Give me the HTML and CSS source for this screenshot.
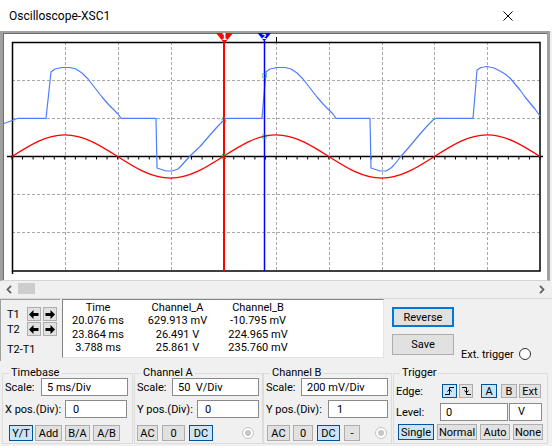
FILE: index.html
```html
<!DOCTYPE html>
<html lang="en">
<head>
<meta charset="utf-8">
<title>Oscilloscope-XSC1</title>
<link rel="stylesheet" href="styles.css">
</head>
<body>
<div class="titlebar">
  <span class="title">Oscilloscope-XSC1</span>
  <svg class="close" width="10" height="10" viewBox="0 0 10 10"><path d="M0.5 0.5L9.5 9.5M9.5 0.5L0.5 9.5" stroke="#000" stroke-width="1" fill="none"/></svg>
</div>

<div class="scope">
  <svg class="plot" width="544" height="247" viewBox="3 33 544 247">
    <g stroke="#a8a8a8" stroke-width="1" stroke-dasharray="3 2" shape-rendering="crispEdges" fill="none">
      <path d="M65.5 42V271M118.5 42V271M171 42V271M223.5 42V271M276.5 42V271M329 42V271M382 42V271M434.5 42V271M487.5 42V271"/>
      <path d="M12 80.5H540M12 118.5H540M12 194.5H540M12 232.5H540"/>
    </g>
    <rect x="12.5" y="42.5" width="527.5" height="228.5" fill="none" stroke="#000" stroke-width="1.5"/>
    <line x1="12.5" y1="271" x2="12.5" y2="274" stroke="#000" stroke-width="1.5"/>
    <line x1="7" y1="156.5" x2="543" y2="156.5" stroke="#000" stroke-width="1.5"/>
    <line x1="11.5" y1="158" x2="541" y2="158" stroke="#000" stroke-width="3" stroke-dasharray="1 9.56"/>
    <line x1="276.5" y1="37" x2="276.5" y2="42" stroke="#000" stroke-width="1"/>

    <path class="trace-a" d="M12,156.5 C29.24,145.42 45.69,134.9 64.8,134.9 S100.36,145.42 117.6,156.5 S151.29,178.1 170.4,178.1 S205.96,167.58 223.2,156.5 S256.89,134.9 276,134.9 S311.56,145.42 328.8,156.5 S362.49,178.1 381.6,178.1 S417.16,167.58 434.4,156.5 S468.09,134.9 487.2,134.9 S522.76,145.42 540,156.5"/>

    <polyline class="trace-b" points="4,123.5 18,118.3 46,118.3 48,100 51,72 55,69 62,67.5 70,67.5 76,69 82,73 88,79 95,88 102,97 108,104 114,110 118,114 121,118.3 156,118.3 157,168 160,169 166,171 172,171 178,169 181,166 190,156 200,146.5 210,135 218,126 224,120 226,118.3 262,118.3 264,95 266,72 270,69 277,67.5 285,67.5 291,69 297,73 303,79 310,88 317,97 323,104 329,110 333,114 336,118.3 370,118.3 371,168 374,169 380,171 386,171 391,168 394,165 400,157.5 410,146 420,134 428,125 433,120 436,118.3 473,118.3 475,95 477,70 481,67.5 487,66.5 494,68 500,71 505,74 510,78 515,84 520,90 525,97 530,103 535,109 540,116"/>

    <line x1="224" y1="42" x2="224" y2="271" stroke="#ff0000" stroke-width="2"/>
    <line x1="264.5" y1="41" x2="264.5" y2="271" stroke="#0000ff" stroke-width="1.5"/>
    <polygon points="216,33 233,33 224.5,43.5" fill="#ff0000"/>
    <text x="224.5" y="39.5" class="cur-num">1</text>
    <polygon points="257.5,33 271,33 264.25,41.5" fill="#0000ff"/>
    <text x="264.25" y="38.5" class="cur-num small">2</text>

    <g fill="none" stroke="#2cb24a" stroke-width="1" stroke-dasharray="1 1">
      <rect x="222" y="154.5" width="4" height="4"/>
      <rect x="222" y="118" width="4" height="4"/>
      <rect x="262.5" y="134.5" width="4" height="4"/>
      <rect x="262.5" y="73.5" width="4" height="4"/>
    </g>
  </svg>
</div>

<div class="hscroll">
  <svg class="chev" width="6" height="9" viewBox="0 0 6 9"><path d="M5 0.8L1.5 4.5L5 8.2" stroke="#606060" stroke-width="1.8" fill="none"/></svg>
  <span class="thumb"></span>
  <span class="spacer"></span>
  <svg class="chev right" width="6" height="9" viewBox="0 0 6 9"><path d="M1 0.8L4.5 4.5L1 8.2" stroke="#606060" stroke-width="1.8" fill="none"/></svg>
</div>

<div class="cursors">
  <div class="tpanel">
    <div class="trow">
      <span class="tlabel">T1</span>
      <button class="abtn"><svg width="10" height="9" viewBox="0 0 10 9"><path d="M0 4.5L4.5 0V3H9.5V6H4.5V9Z" fill="#000"/></svg></button>
      <button class="abtn"><svg width="10" height="9" viewBox="0 0 10 9"><path d="M10 4.5L5.5 0V3H0.5V6H5.5V9Z" fill="#000"/></svg></button>
    </div>
    <div class="trow">
      <span class="tlabel">T2</span>
      <button class="abtn"><svg width="10" height="9" viewBox="0 0 10 9"><path d="M0 4.5L4.5 0V3H9.5V6H4.5V9Z" fill="#000"/></svg></button>
      <button class="abtn"><svg width="10" height="9" viewBox="0 0 10 9"><path d="M10 4.5L5.5 0V3H0.5V6H5.5V9Z" fill="#000"/></svg></button>
    </div>
    <div class="tdiff">T2-T1</div>
  </div>

  <div class="readout">
    <span>Time</span><span>Channel_A</span><span>Channel_B</span>
    <span>20.076 ms</span><span>629.913 mV</span><span>-10.795 mV</span>
    <span>23.864 ms</span><span>26.491 V</span><span>224.965 mV</span>
    <span>3.788 ms</span><span>25.861 V</span><span>235.760 mV</span>
  </div>

  <div class="actions">
    <button class="btn reverse">Reverse</button>
    <div class="saverow">
      <button class="btn save">Save</button>
      <div class="ext"><span>Ext. trigger</span><span class="radio-ext"></span></div>
    </div>
  </div>
</div>

<div class="groups">
  <fieldset class="grp tb">
    <legend>Timebase</legend>
    <div class="row"><span class="lbl-s">Scale:</span><input class="in in-s" value="5 ms/Div"></div>
    <div class="row"><span class="lbl-p">X pos.(Div):</span><input class="in in-p" value="0"></div>
    <div class="row btns tb-btns">
      <button class="btn sm on w24">Y/T</button>
      <button class="btn sm w27 g2">Add</button>
      <button class="btn sm w25 g3">B/A</button>
      <button class="btn sm w27 g3">A/B</button>
    </div>
  </fieldset>

  <fieldset class="grp cha">
    <legend>Channel A</legend>
    <div class="row"><span class="lbl-s">Scale:</span><input class="in in-s" value="50&nbsp;&nbsp;V/Div"></div>
    <div class="row"><span class="lbl-p">Y pos.(Div):</span><input class="in in-p" value="0"></div>
    <div class="row btns">
      <button class="btn sm w21">AC</button>
      <button class="btn sm w23 g4">0</button>
      <button class="btn sm on w24 g4">DC</button>
      <span class="radio-dis cha-radio"></span>
    </div>
  </fieldset>

  <fieldset class="grp chb">
    <legend>Channel B</legend>
    <div class="row"><span class="lbl-s">Scale:</span><input class="in in-s" value="200 mV/Div"></div>
    <div class="row"><span class="lbl-p wide">Y pos.(Div):</span><input class="in in-p narrow" value="1"></div>
    <div class="row btns chb-btns">
      <button class="btn sm w23">AC</button>
      <button class="btn sm w20 g3">0</button>
      <button class="btn sm on w23 g4">DC</button>
      <button class="btn sm w16 g4">-</button>
      <span class="radio-dis chb-radio"></span>
    </div>
  </fieldset>

  <fieldset class="grp trg">
    <legend>Trigger</legend>
    <div class="row trow1">
      <span class="lbl-edge">Edge:</span>
      <button class="btn ebtn on w15"><svg width="11" height="10" viewBox="0 0 11 10"><path d="M1 8.5H5.5V1.5H10" stroke="#000" fill="none"/><path d="M3.5 5.5L5.5 3.2L7.5 5.5" stroke="#000" fill="none"/></svg></button>
      <button class="btn ebtn w14 g2"><svg width="11" height="10" viewBox="0 0 11 10"><path d="M1 1.5H5.5V8.5H10" stroke="#000" fill="none"/><path d="M3.5 4.5L5.5 6.8L7.5 4.5" stroke="#000" fill="none"/></svg></button>
      <button class="btn ebtn on w16 g8">A</button>
      <button class="btn ebtn w16 g4">B</button>
      <button class="btn ebtn w22 g2">Ext</button>
    </div>
    <div class="row trow2">
      <span class="lbl-level">Level:</span>
      <input class="in in-level" value="0">
      <span class="unit">V</span>
    </div>
    <div class="row trow3">
      <button class="btn sm on w36">Single</button>
      <button class="btn sm w40 g3">Normal</button>
      <button class="btn sm w30 g3">Auto</button>
      <button class="btn sm w30 g3">None</button>
    </div>
  </fieldset>
</div>
</body>
</html>
```
FILE: styles.css
```css
* { box-sizing: border-box; }

body {
  margin: 0;
  width: 552px;
  height: 446px;
  overflow: hidden;
  background: #f0f0f0;
  font-family: Roboto, "Liberation Sans", sans-serif;
  font-size: 11px;
  color: #000;
}

button, input {
  font-family: inherit;
  font-size: 11px;
  color: #000;
}

/* title bar */
.titlebar {
  height: 31px;
  background: #fff;
  display: flex;
  align-items: center;
  padding-left: 9px;
}
.title { flex: 1; font-size: 12px; padding-top: 1px; }
.close { margin-right: 39px; }

/* scope canvas */
.scope {
  width: 550px;
  height: 250px;
  border-style: solid;
  border-color: #a0a0a0;
  border-width: 2px 3px 1px 3px;
  border-bottom-color: #d4d4d4;
  box-shadow: inset 1px 1px 0 #6d6d6d;
  background: #fff;
}
.plot { display: block; }
.trace-a { fill: none; stroke: #ff0000; stroke-width: 1.35; }
.trace-b { fill: none; stroke: #4f7dff; stroke-width: 1.2; stroke-linejoin: round; }
.cur-num {
  font-family: "DejaVu Sans", sans-serif;
  font-size: 8px;
  font-weight: bold;
  fill: #fff;
  text-anchor: middle;
}
.cur-num.small { font-size: 7px; }

/* horizontal scrollbar */
.hscroll {
  height: 18px;
  display: flex;
  align-items: flex-start;
  border-bottom: 1px solid #dadada;
  padding-left: 6px;
}
.chev { margin-top: 4px; display: block; }
.chev.right { margin-right: 7px; }
.thumb {
  margin-left: 6px;
  margin-top: 2px;
  width: 17px;
  height: 11px;
  background: #cdcdcd;
}
.spacer { flex: 1; }

/* cursor readout panel */
.cursors {
  height: 63px;
  display: flex;
}
.tpanel {
  width: 60px;
  height: 62px;
  border-top: 1px solid #a0a0a0;
  border-left: 1px solid #a0a0a0;
  padding: 7px 0 0 6px;
}
.trow {
  display: flex;
  align-items: center;
  height: 14px;
}
.trow + .trow { margin-top: 1px; }
.tlabel { width: 20px; }
.abtn {
  width: 14px;
  height: 14px;
  padding: 0;
  margin-right: 2px;
  background: #e1e1e1;
  border: 1px solid #adadad;
  display: flex;
  align-items: center;
  justify-content: center;
}
.tdiff { margin-top: 7px; line-height: 13px; }

.readout {
  margin-left: 2px;
  width: 322px;
  height: 59px;
  background: #fff;
  border: 1px solid #e3e3e3;
  border-top-color: #828282;
  border-left-color: #828282;
  display: grid;
  grid-template-columns: 70px 89px 72px;
  grid-auto-rows: 13.33px;
  line-height: 13.33px;
  padding-top: 1px;
  text-align: center;
  white-space: nowrap;
}

.actions {
  margin-left: 8px;
  padding-top: 8px;
}
.btn {
  background: #e1e1e1;
  border: 1px solid #adadad;
  padding: 0;
  display: flex;
  align-items: center;
  justify-content: center;
  white-space: nowrap;
}
.btn.on {
  background: #cce4f7;
  border-color: #005499;
}
.reverse {
  width: 62px;
  height: 20px;
  border: 2px solid #0078d7;
}
.saverow {
  display: flex;
  align-items: flex-start;
  margin-top: 7px;
}
.save { width: 62px; height: 21px; }
.ext {
  display: flex;
  align-items: center;
  margin-left: 7px;
  margin-top: 14px;
  height: 12px;
}
.radio-ext {
  margin-left: 5px;
  width: 12px;
  height: 12px;
  border: 1px solid #333;
  border-radius: 50%;
  background: #fff;
}

/* control groups */
.groups {
  display: flex;
  padding: 6px 0 0 2px;
  height: 84px;
}
.grp {
  margin: 0;
  height: 76px;
  min-width: 0;
  border: 1px solid #dcdcdc;
  padding: 0 3px 0 2px;
}
.grp legend {
  padding: 0 2px;
  margin-left: 4px;
  line-height: 10px;
}
.tb { width: 131px; }
.cha { width: 129px; margin-left: 1px; }
.chb { width: 129px; }
.trg { width: 155px; margin-left: 1px; }

.row {
  display: flex;
  align-items: center;
  height: 18px;
  white-space: nowrap;
}
.row + .row { margin-top: 4px; }
.row.btns { margin-top: 7px; height: 16px; }
.lbl-s { width: 36px; }
.lbl-p { width: 60px; }
.lbl-p.wide { width: 62px; }
.in {
  height: 18px;
  border: 1px solid #8a8a8a;
  background: #fff;
  padding: 0 0 0 5px;
  margin: 0;
  outline: none;
}
.in-s { width: 87px; }
.in-p { width: 62px; padding-left: 7px; }
.in-p.narrow { width: 60px; padding-left: 8px; }

.sm { height: 16px; }
.tb-btns { padding-left: 4px; }
.chb-btns { padding-left: 1px; }

.w14 { width: 14px; }
.w15 { width: 15px; }
.w16 { width: 16px; }
.w20 { width: 20px; }
.w21 { width: 21px; }
.w22 { width: 22px; }
.w23 { width: 23px; }
.w24 { width: 24px; }
.w25 { width: 25px; }
.w27 { width: 27px; }
.w30 { width: 30px; }
.w36 { width: 36px; }
.w40 { width: 40px; }
.g2 { margin-left: 2px; }
.g3 { margin-left: 3px; }
.g4 { margin-left: 4px; }
.g8 { margin-left: 8px; }

.radio-dis {
  width: 12px;
  height: 12px;
  border: 1px solid #c4c4c4;
  border-radius: 50%;
  background: #fff;
  display: flex;
  align-items: center;
  justify-content: center;
}
.radio-dis::after {
  content: "";
  width: 6px;
  height: 6px;
  border-radius: 50%;
  background: #c6c6c6;
}
.cha-radio { margin-left: 29px; }
.chb-radio { margin-left: 15px; }

/* trigger */
.trg .row.trow1 { margin-top: 6px; height: 14px; }
.trg .row.trow2 { margin-top: 5px; }
.trg .row.trow3 { margin-top: 3px; height: 16px; padding-left: 2px; }
.lbl-edge { width: 46px; }
.ebtn { height: 14px; }
.lbl-level { width: 44px; }
.in-level { width: 68px; }
.unit {
  margin-left: 1px;
  width: 33px;
  height: 18px;
  border: 1px solid #8a8a8a;
  background: #fff;
  padding-left: 8px;
  line-height: 16px;
}
```
